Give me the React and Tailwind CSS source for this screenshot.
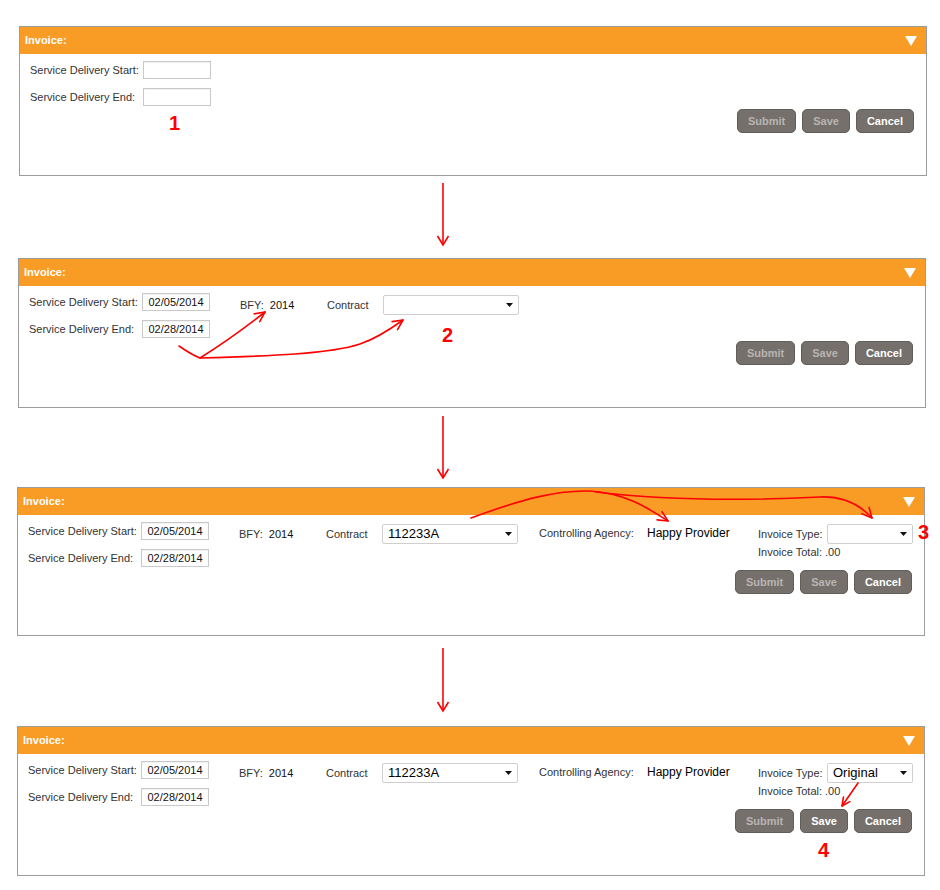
import React from 'react';

const FONT = { fontFamily: '"Liberation Sans", Arial, sans-serif' };

const Caret = () => (
  <svg width="7" height="4" viewBox="0 0 7 4" className="shrink-0">
    <path d="M0 0 L7 0 L3.5 4 Z" fill="#111" />
  </svg>
);

const DateBox = ({ value }) => (
  <div className="w-[68px] h-[18px] border border-[#c9c9c9] bg-white flex items-center justify-center text-[11px] text-[#111] shadow-[inset_0_1px_1px_rgba(0,0,0,0.06)]">
    {value}
  </div>
);

const SelectBox = ({ width, value }) => (
  <div
    className={`${width} h-[20px] border border-[#cfcfcf] rounded-[2px] bg-white flex items-center justify-between pl-[5px] pr-[5px] text-[13px] text-black`}
  >
    <span>{value}</span>
    <Caret />
  </div>
);

const Btn = ({ label, active }) => (
  <div
    className={`h-[24px] px-[10px] rounded-[5px] bg-[#75706c] border border-[#615d59] flex items-center text-[11px] font-bold ${
      active ? 'text-white' : 'text-[#b9b5b1]'
    }`}
  >
    {label}
  </div>
);

const Panel = ({ offset, height, step, start, end, contract, agency, invoiceType, saveActive }) => (
  <div className={`${offset} ${height} w-[908px] border border-[#9c9c9c] bg-white`}>
    <div className="h-[27px] bg-[#f89c25] flex items-center justify-between pl-[5px] pr-[9px]">
      <span className="text-white text-[11px] font-bold">Invoice:</span>
      <svg width="12" height="10" viewBox="0 0 12 10">
        <path d="M0 0 L12 0 L6 10 Z" fill="#fff" />
      </svg>
    </div>
    <div className="pl-[10px] pr-[12px] pt-[7px]">
      <div className="flex items-start h-[45px]">
        <div className="flex flex-col gap-[9px] w-[181px] shrink-0">
          <div className="flex items-center h-[18px]">
            <span className="w-[113px] text-[11px] text-[#333]">Service Delivery Start:</span>
            <DateBox value={start} />
          </div>
          <div className="flex items-center h-[18px]">
            <span className="w-[113px] text-[11px] text-[#333]">Service Delivery End:</span>
            <DateBox value={end} />
          </div>
        </div>
        {step >= 2 && (
          <div className="flex items-center h-[20px] mt-[2px] ml-[30px]">
            <div className="w-[87px] flex items-center text-[11px]">
              <span className="text-[#333]">BFY:</span>
              <span className="ml-[6px] text-[#111]">2014</span>
            </div>
            <span className="w-[56px] text-[11px] text-[#333]">Contract</span>
            <SelectBox width="w-[136px]" value={contract} />
          </div>
        )}
        {step >= 3 && (
          <>
            <div className="flex items-center h-[20px] mt-[1px] ml-[21px]">
              <span className="w-[108px] text-[11px] text-[#333]">Controlling Agency:</span>
              <span className="w-[111px] text-[12px] text-black">{agency}</span>
            </div>
            <div className="flex flex-col mt-[2px]">
              <div className="flex items-center h-[20px]">
                <span className="w-[69px] text-[11px] text-[#333]">Invoice Type:</span>
                <SelectBox width="w-[86px]" value={invoiceType} />
              </div>
              <div className="text-[11px] text-[#333] leading-[14px] mt-[1px]">Invoice Total: .00</div>
            </div>
          </>
        )}
      </div>
      <div className="flex justify-end gap-[6px] mt-[3px]">
        <Btn label="Submit" />
        <Btn label="Save" active={saveActive} />
        <Btn label="Cancel" active />
      </div>
    </div>
  </div>
);

const DownArrow = ({ height, from, to }) => (
  <div className={`${height} relative`}>
    <svg width="940" height="100%" className="block">
      <line x1="443" y1={from} x2="443" y2={to} stroke="#f00" strokeWidth="1.6" />
      <polyline
        points={`437.5,${to - 9} 443,${to} 448.5,${to - 9}`}
        fill="none"
        stroke="#f00"
        strokeWidth="1.6"
      />
    </svg>
  </div>
);

// arrowhead at tip (x,y) pointing along angle (radians)
const head = (x, y, angle, len = 11) => {
  const a1 = angle + Math.PI - 0.45;
  const a2 = angle + Math.PI + 0.45;
  return `${x + len * Math.cos(a1)},${y + len * Math.sin(a1)} ${x},${y} ${x + len * Math.cos(a2)},${y + len * Math.sin(a2)}`;
};

const Annotations = () => (
  <svg width="940" height="890" className="absolute inset-0 pointer-events-none">
    <g fill="none" stroke="#f00" strokeWidth="1.6" strokeLinecap="round" strokeLinejoin="round">
      {/* step 2 */}
      <path d="M179 346 Q192 355 200 358 Q232 338 265 312" />
      <polyline points={head(265, 312, -0.62)} />
      <path d="M200 358 C270 356 330 354 360 344 C378 338 392 328 403 320" />
      <polyline points={head(403, 320, -0.6)} />
      {/* step 3 */}
      <path d="M471 518 C520 500 555 490 590 491 C625 493 648 508 668 521" />
      <polyline points={head(668, 521, 0.55)} />
      <path d="M596 492 C680 502 760 500 820 497 C843 496 860 505 872 518" />
      <polyline points={head(872, 518, 0.85)} />
      {/* step 4 */}
      <path d="M858 783 L842 806" />
      <polyline points={head(842, 806, 2.18, 9)} />
    </g>
  </svg>
);

const Num = ({ pos, children }) => (
  <span className={`absolute ${pos} text-[20px] leading-[20px] font-bold text-[#f00]`}>{children}</span>
);

export default function App() {
  return (
    <div className="relative w-[940px] h-[890px] bg-white pt-[26px]" style={FONT}>
      <Panel offset="ml-[19px]" height="h-[150px]" step={1} start="" end="" />
      <DownArrow height="h-[82px]" from={7} to={69} />
      <Panel offset="ml-[18px]" height="h-[150px]" step={2} start="02/05/2014" end="02/28/2014" contract="" />
      <DownArrow height="h-[79px]" from={8} to={70} />
      <Panel
        offset="ml-[17px]"
        height="h-[149px]"
        step={3}
        start="02/05/2014"
        end="02/28/2014"
        contract="112233A"
        agency="Happy Provider"
        invoiceType=""
      />
      <DownArrow height="h-[90px]" from={12} to={75} />
      <Panel
        offset="ml-[17px]"
        height="h-[150px]"
        step={3}
        start="02/05/2014"
        end="02/28/2014"
        contract="112233A"
        agency="Happy Provider"
        invoiceType="Original"
        saveActive
      />
      <Annotations />
      <Num pos="left-[169px] top-[113px]">1</Num>
      <Num pos="left-[442px] top-[325px]">2</Num>
      <Num pos="left-[918px] top-[522px]">3</Num>
      <Num pos="left-[818px] top-[840px]">4</Num>
    </div>
  );
}
